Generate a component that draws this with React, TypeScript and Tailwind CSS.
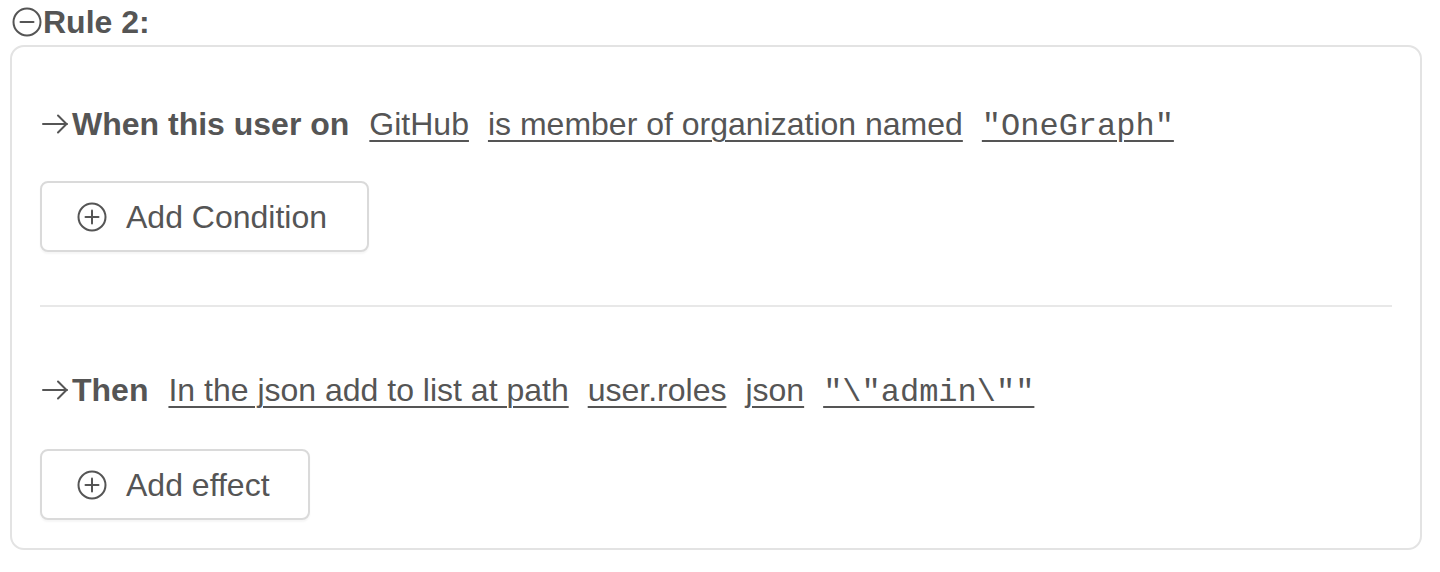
import React from 'react';

function CircleIcon({ plus }: { plus?: boolean }) {
  return (
    <svg width="30" height="30" viewBox="0 0 30 30" fill="none" stroke="currentColor" strokeWidth="2" strokeLinecap="round">
      <circle cx="15" cy="15" r="13.5" />
      <path d="M8.5 15h13" />
      {plus && <path d="M15 8.5v13" />}
    </svg>
  );
}

function Arrow() {
  return (
    <svg width="27" height="20" viewBox="0 0 27 20" fill="none" stroke="currentColor" strokeWidth="2" strokeLinecap="round" strokeLinejoin="round" className="self-center ml-[2px] shrink-0">
      <path d="M1 10h24" />
      <path d="M16 1.5 24.5 10 16 18.5" />
    </svg>
  );
}

function Link({ children, mono }: { children: React.ReactNode; mono?: boolean }) {
  return (
    <span
      className={`underline decoration-[2px] underline-offset-[5px] ${mono ? "font-['Liberation_Mono',monospace]" : ''}`}
    >
      {children}
    </span>
  );
}

function AddButton({ label, pr }: { label: string; pr: string }) {
  return (
    <button className={`flex items-center gap-[19px] h-[71px] pl-[35px] ${pr} border-2 border-[#dadada] rounded-[8px] bg-white shadow-[0_2px_2px_rgba(0,0,0,0.04)] text-[32px] text-[#555]`}>
      <CircleIcon plus />
      <span>{label}</span>
    </button>
  );
}

export default function App() {
  return (
    <div className="min-h-[572px] bg-white text-[#555] font-['Liberation_Sans',Arial,sans-serif] text-[32px]">
      <div className="flex items-center pl-[12px] pt-[4px] leading-[36px]">
        <CircleIcon />
        <span className="font-bold ml-[1px]">Rule 2:</span>
      </div>

      <div className="mt-[5px] ml-[10px] w-[1412px] border-2 border-[#e3e3e3] rounded-[14px] px-[28px] pt-[53px] pb-[28px]">
        <div className="flex items-baseline h-[48px] leading-[48px] whitespace-nowrap">
          <Arrow />
          <span className="font-bold ml-[3px] mr-[20px]">When this user on</span>
          <div className="flex items-baseline gap-[19px]">
            <Link>GitHub</Link>
            <Link>is member of organization named</Link>
            <Link mono>"OneGraph"</Link>
          </div>
        </div>

        <div className="mt-[33px] flex">
          <AddButton label="Add Condition" pr="pr-[40px]" />
        </div>

        <div className="mt-[53px] h-[2px] bg-[#e8e8e8]" />

        <div className="mt-[59px] flex items-baseline h-[48px] leading-[48px] whitespace-nowrap">
          <Arrow />
          <span className="font-bold ml-[3px] mr-[20px]">Then</span>
          <div className="flex items-baseline gap-[19px]">
            <Link>In the json add to list at path</Link>
            <Link>user.roles</Link>
            <Link>json</Link>
            <Link mono>"\"admin\""</Link>
          </div>
        </div>

        <div className="mt-[35px] flex">
          <AddButton label="Add effect" pr="pr-[38px]" />
        </div>
      </div>
    </div>
  );
}
